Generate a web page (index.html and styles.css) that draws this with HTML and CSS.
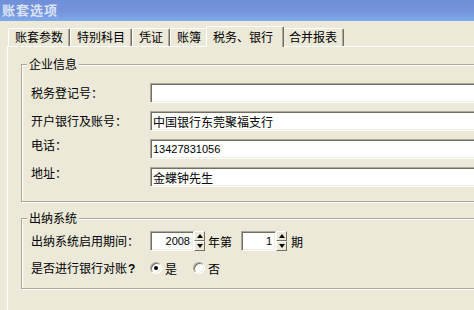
FILE: index.html
```html
<!DOCTYPE html>
<html lang="zh-CN">
<head>
    <meta charset="UTF-8">
    <meta name="viewport" content="width=device-width, initial-scale=1.0">
    <title>账套选项</title>
    <link rel="stylesheet" href="styles.css">
</head>
<body>

    <div class="window">
        <div class="caption">账套选项</div>

        <div class="tabs">
            <div class="tab">账套参数</div>
            <div class="tab">特别科目</div>
            <div class="tab">凭证</div>
            <div class="tab">账簿</div>
            <div class="tab tab-active">税务、银行</div>
            <div class="tab">合并报表</div>
        </div>

        <div class="page">
            <div class="group group-company">
                <span class="group-title">企业信息</span>

                <div class="row">
                    <label for="taxNo">税务登记号：</label>
                    <input class="field" type="text" id="taxNo" value="">
                </div>
                <div class="row">
                    <label for="bank">开户银行及账号：</label>
                    <input class="field" type="text" id="bank" value="中国银行东莞聚福支行">
                </div>
                <div class="row">
                    <label class="label-top" for="phone">电话：</label>
                    <input class="field num" type="text" id="phone" value="13427831056">
                </div>
                <div class="row">
                    <label class="label-top" for="address">地址：</label>
                    <input class="field" type="text" id="address" value="金蝶钟先生">
                </div>
            </div>

            <div class="group group-cashier">
                <span class="group-title">出纳系统</span>

                <div class="row">
                    <label for="year">出纳系统启用期间：</label>
                    <div class="period">
                        <input class="field num spin-field year" type="text" id="year" value="2008">
                        <div class="spin"><span class="spin-up"></span><span class="spin-down"></span></div>
                        <span class="unit">年第</span>
                        <input class="field num spin-field month" type="text" id="month" value="1">
                        <div class="spin"><span class="spin-up"></span><span class="spin-down"></span></div>
                        <span class="unit unit-last">期</span>
                    </div>
                </div>

                <div class="row row-radio">
                    <label>是否进行银行对账<b class="q">?</b></label>
                    <div class="choices">
                        <span class="radio checked"></span><span class="choice">是</span>
                        <span class="radio radio-second"></span><span class="choice">否</span>
                    </div>
                </div>
            </div>
        </div>
    </div>

</body>
</html>
```

FILE: styles.css
```css
* {
    margin: 0;
    padding: 0;
    box-sizing: border-box;
    font-family: 'Noto Sans CJK SC', 'Liberation Sans', sans-serif;
}

body {
    width: 474px;
    height: 310px;
    overflow: hidden;
    background-color: #ece9d8;
    color: #000;
    font-size: 12px;
}

.window {
    width: 560px;
    height: 310px;
}

.caption {
    height: 21px;
    padding-left: 2px;
    line-height: 20px;
    font-size: 13px;
    font-weight: bold;
    letter-spacing: 1px;
    color: #dce5f7;
    background: linear-gradient(to bottom, #6f8fd8 0%, #7594dc 55%, #7faaea 100%);
}

/* tab strip */
.tabs {
    display: flex;
    align-items: flex-end;
    height: 25px;
    padding-left: 8px;
    position: relative;
    z-index: 1;
}

.tab {
    height: 18px;
    padding: 0 6px;
    line-height: 16px;
    white-space: nowrap;
    background-color: #ece9d8;
    border-top: 1px solid #fff;
    border-left: 1px solid #fff;
    border-right: 1px solid #716f64;
    border-radius: 2px 2px 0 0;
    box-shadow: inset -1px 0 0 #aca899;
}

.tab-active {
    height: 21px;
    margin: 0 -2px -1px;
    padding: 0 10px 0 6px;
    line-height: 19px;
    position: relative;
    z-index: 2;
}

/* tab page */
.page {
    margin-left: 7px;
    padding: 17px 0 0 13px;
    border-top: 1px solid #fff;
    border-left: 1px solid #fff;
    height: 264px;
}

.group {
    position: relative;
    border: 1px solid #aca899;
    box-shadow: inset 1px 1px 0 #fff, 1px 1px 0 #fff;
}

.group-company {
    padding: 18px 0 14px 9px;
    display: flex;
    flex-direction: column;
    gap: 8px;
}

.group-cashier {
    margin-top: 16px;
    padding: 12px 0 10px 9px;
}

.group-title {
    position: absolute;
    top: -8px;
    left: 5px;
    padding: 0 2px;
    line-height: 14px;
    background-color: #ece9d8;
}

.row {
    display: grid;
    grid-template-columns: 119px auto;
    align-items: center;
    height: 20px;
}

.row label {
    line-height: 14px;
}

.row .label-top {
    align-self: start;
    line-height: 12px;
}

.row-radio {
    margin-top: 7px;
}

.q {
    font-family: 'Liberation Sans', sans-serif;
    font-size: 12px;
    margin-left: 1px;
}

/* sunken edit boxes */
.field {
    width: 360px;
    height: 20px;
    padding: 0 2px;
    font-size: 12px;
    color: #000;
    background-color: #fff;
    border: 1px solid;
    border-color: #aca899 #fff #fff #aca899;
    box-shadow: inset 1px 1px 0 #716f64, inset -1px -1px 0 #f1efe2;
    outline: none;
}

.num {
    font-family: 'Liberation Sans', sans-serif;
    font-size: 11px;
}

.period {
    display: flex;
    align-items: center;
}

.spin-field {
    text-align: right;
    padding-right: 3px;
}

.year {
    width: 44px;
}

.month {
    width: 35px;
}

.spin {
    display: flex;
    flex-direction: column;
    width: 11px;
    height: 20px;
}

.spin span {
    flex: 1;
    display: flex;
    align-items: center;
    justify-content: center;
    background-color: #ece9d8;
    border: 1px solid;
    border-color: #fff #716f64 #716f64 #fff;
}

.spin-up::before {
    content: "";
    border-left: 3px solid transparent;
    border-right: 3px solid transparent;
    border-bottom: 4px solid #000;
}

.spin-down::before {
    content: "";
    border-left: 3px solid transparent;
    border-right: 3px solid transparent;
    border-top: 4px solid #000;
}

.unit {
    margin: 0 9px 0 3px;
}

.unit-last {
    margin-left: 4px;
}

/* radio buttons */
.choices {
    display: flex;
    align-items: center;
}

.radio {
    position: relative;
    width: 12px;
    height: 12px;
    border-radius: 50%;
    background-color: #fff;
    border: 1px solid;
    border-color: #aca899 #fff #fff #aca899;
    box-shadow: inset 1px 1px 0 #716f64, inset -1px -1px 0 #f1efe2;
}

.radio.checked::after {
    content: "";
    position: absolute;
    top: 3px;
    left: 3px;
    width: 4px;
    height: 4px;
    border-radius: 50%;
    background-color: #000;
}

.radio-second {
    margin-left: 16px;
}

.choice {
    margin-left: 3px;
}
```
